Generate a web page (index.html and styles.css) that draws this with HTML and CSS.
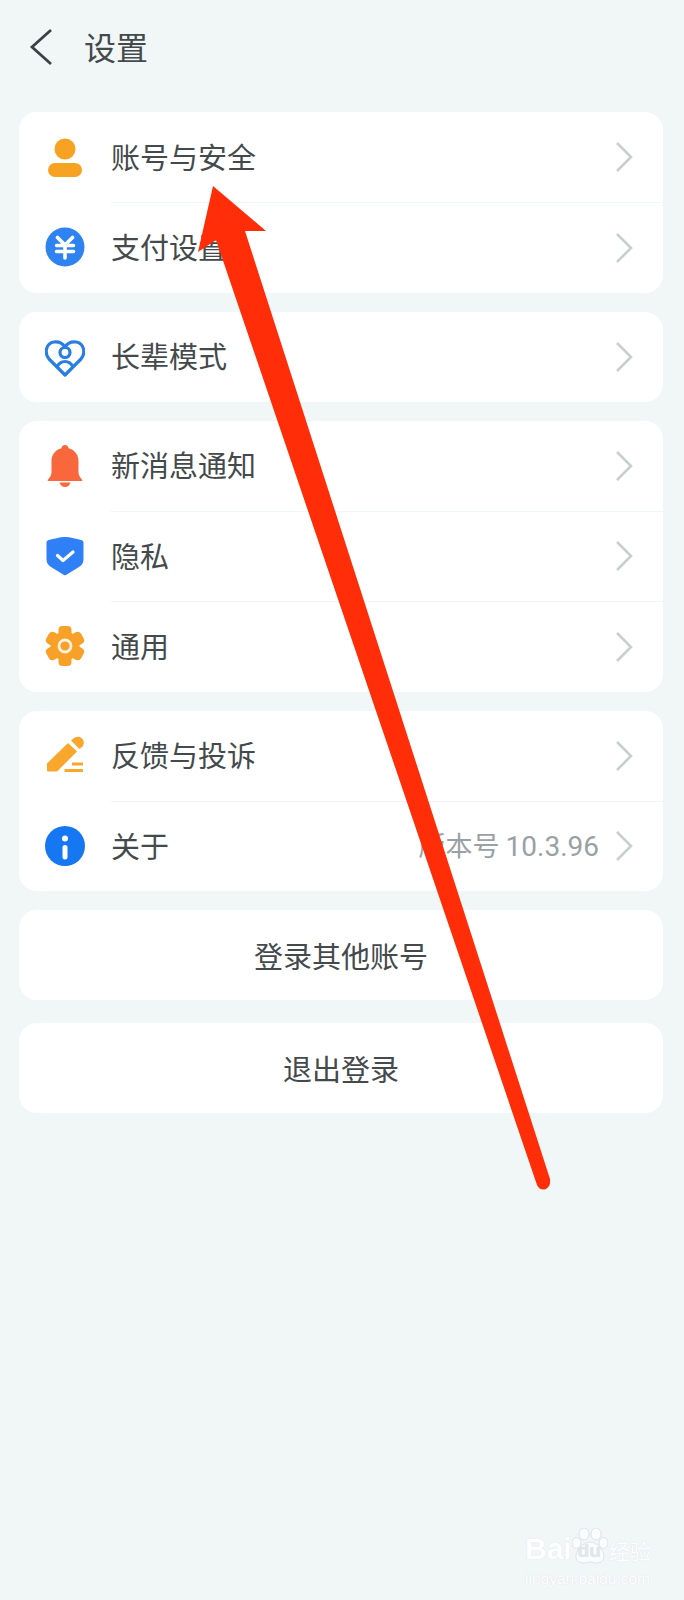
FILE: index.html
```html
<!DOCTYPE html>
<html lang="zh-CN">
<head>
    <meta charset="UTF-8">
    <meta name="viewport" content="width=device-width, initial-scale=1.0">
    <title>设置</title>
    <link rel="stylesheet" href="styles.css">
</head>
<body>
<div class="page">
    <header class="top-bar">
        <svg class="back-icon" width="24" height="38" viewBox="0 0 24 38">
            <polyline points="22,2 3,19 22,36"/>
        </svg>
        <h1 class="top-title">设置</h1>
    </header>

    <div class="card-list">
        <section class="card">
            <div class="row">
                <span class="row-icon">
                    <svg width="40" height="40" viewBox="0 0 40 40" fill="#f8a223">
                        <circle cx="20" cy="12" r="10.5"/>
                        <rect x="3" y="26" width="34" height="14" rx="7"/>
                    </svg>
                </span>
                <div class="row-main"><span class="row-label">账号与安全</span><svg class="chevron" width="18" height="30" viewBox="0 0 18 30"><polyline points="2,1 16,15 2,29"/></svg></div>
            </div>
            <div class="row">
                <span class="row-icon">
                    <svg width="40" height="40" viewBox="0 0 40 40">
                        <circle cx="20" cy="20" r="19.5" fill="#2f83f1"/>
                        <path d="M12.5 10.500l7.500 7.500 7.500-7.500M11.500 18.500h17M11.500 24.500h17M20 18v13" fill="none" stroke="#fff" stroke-width="3.6" stroke-linecap="round" stroke-linejoin="round"/>
                    </svg>
                </span>
                <div class="row-main"><span class="row-label">支付设置</span><svg class="chevron" width="18" height="30" viewBox="0 0 18 30"><polyline points="2,1 16,15 2,29"/></svg></div>
            </div>
        </section>

        <section class="card">
            <div class="row">
                <span class="row-icon">
                    <svg width="40" height="40" viewBox="0 0 40 40" fill="none" stroke="#2a7de1" stroke-width="3.2">
                        <path d="M20 38L4 22C-1 16 1 6 9 5 14 4.300 18 7 20 10 22 7 26 4.300 31 5 39 6 41 16 36 22z" stroke-linejoin="round"/>
                        <circle cx="20" cy="15.500" r="5"/>
                        <path d="M12 30C14 26 17 24.500 20 24.500S26 26 28 30"/>
                    </svg>
                </span>
                <div class="row-main"><span class="row-label">长辈模式</span><svg class="chevron" width="18" height="30" viewBox="0 0 18 30"><polyline points="2,1 16,15 2,29"/></svg></div>
            </div>
        </section>

        <section class="card">
            <div class="row">
                <span class="row-icon">
                    <svg width="40" height="42" viewBox="0 0 40 42" fill="#f9673d">
                        <path d="M20 0c2 0 3.500 1.500 3.500 3.300C30 5 33.500 10 33.500 16v11c0 3.500 1.500 5 3 7 .5.800.8 1 .8 1.500 0 .5-.3.500-1.300.500H4c-1 0-1.300 0-1.300-.5 0-.5.300-.7.800-1.500 1.500-2 3-3.500 3-7V16C6.500 10 10 5 16.500 3.300 16.500 1.500 18 0 20 0z"/>
                        <path d="M14.500 37.500h11c-.5 2.500-2.800 4.500-5.500 4.500s-5-2-5.500-4.500z"/>
                    </svg>
                </span>
                <div class="row-main"><span class="row-label">新消息通知</span><svg class="chevron" width="18" height="30" viewBox="0 0 18 30"><polyline points="2,1 16,15 2,29"/></svg></div>
            </div>
            <div class="row">
                <span class="row-icon">
                    <svg width="40" height="40" viewBox="0 0 40 40">
                        <path d="M20 1c6 0 11 2 16 3 1.500.3 2.500 1.200 2.500 3v16c0 4-1.500 6-4.500 8l-13 8c-.6.400-1.400.400-2 0l-13-8c-3-2-4.500-4-4.500-8V7c0-1.800 1-2.700 2.500-3 5-1 10-3 16-3z" fill="#2f80f6"/>
                        <path d="M12.500 19.500l5.500 5 10-8.500" fill="none" stroke="#fff" stroke-width="3.200" stroke-linecap="round" stroke-linejoin="round"/>
                    </svg>
                </span>
                <div class="row-main"><span class="row-label">隐私</span><svg class="chevron" width="18" height="30" viewBox="0 0 18 30"><polyline points="2,1 16,15 2,29"/></svg></div>
            </div>
            <div class="row">
                <span class="row-icon">
                    <svg width="40" height="40" viewBox="0 0 40 40" fill="#f7a128">
                        <circle cx="20" cy="20" r="14.500"/>
                        <rect x="13.500" y="0" width="13" height="12" rx="4"/>
                        <rect x="13.500" y="0" width="13" height="12" rx="4" transform="rotate(60 20 20)"/>
                        <rect x="13.500" y="0" width="13" height="12" rx="4" transform="rotate(120 20 20)"/>
                        <rect x="13.500" y="0" width="13" height="12" rx="4" transform="rotate(180 20 20)"/>
                        <rect x="13.500" y="0" width="13" height="12" rx="4" transform="rotate(240 20 20)"/>
                        <rect x="13.500" y="0" width="13" height="12" rx="4" transform="rotate(300 20 20)"/>
                        <circle cx="20" cy="20" r="6" stroke="#fdf1dd" stroke-width="2.800"/>
                    </svg>
                </span>
                <div class="row-main"><span class="row-label">通用</span><svg class="chevron" width="18" height="30" viewBox="0 0 18 30"><polyline points="2,1 16,15 2,29"/></svg></div>
            </div>
        </section>

        <section class="card">
            <div class="row">
                <span class="row-icon">
                    <svg width="40" height="40" viewBox="0 0 40 40" fill="#f9a72c">
                        <path d="M2 27.500L23 7l9 8.500-20 20H3.500C2.500 35.500 2 35 2 34z"/>
                        <path d="M26 4.500L29 2c3-2 6-1.500 8 .5s2.500 5 .5 8L34.500 13z"/>
                        <rect x="27" y="26.500" width="11" height="3" rx=".5"/>
                        <rect x="19.500" y="33" width="18.500" height="3" rx=".5"/>
                    </svg>
                </span>
                <div class="row-main"><span class="row-label">反馈与投诉</span><svg class="chevron" width="18" height="30" viewBox="0 0 18 30"><polyline points="2,1 16,15 2,29"/></svg></div>
            </div>
            <div class="row">
                <span class="row-icon">
                    <svg width="40" height="40" viewBox="0 0 40 40">
                        <circle cx="20" cy="20" r="20" fill="#1677f2"/>
                        <circle cx="20" cy="12.500" r="3" fill="#fff"/>
                        <rect x="17.500" y="19" width="5" height="14.500" rx="2.500" fill="#fff"/>
                    </svg>
                </span>
                <div class="row-main"><span class="row-label">关于</span><span class="row-value">版本号 <span class="version-number">10.3.96</span></span><svg class="chevron" width="18" height="30" viewBox="0 0 18 30"><polyline points="2,1 16,15 2,29"/></svg></div>
            </div>
        </section>

        <section class="card action-card">登录其他账号</section>
        <section class="card action-card logout-card">退出登录</section>
    </div>
</div>

<!-- red arrow annotation over the list -->
<svg class="arrow-mark" width="684" height="1600" viewBox="0 0 684 1600">
    <path d="M213 186L266 231 245 231 550 1179Q551 1186 546 1189 540 1191 537 1185L216 240 198 252z" fill="#ff2e08"/>
</svg>

<div class="watermark">
    <div class="wm-top">
        <span class="wm-brand">Bai</span>
        <span class="wm-paw">
            <svg width="36" height="36" viewBox="0 0 36 36" fill="#fbfcfd" stroke="#dde4e7">
                <ellipse cx="12" cy="6" rx="5" ry="6"/>
                <ellipse cx="24" cy="6" rx="5" ry="6"/>
                <ellipse cx="4.500" cy="15" rx="4.500" ry="5.500"/>
                <ellipse cx="31.500" cy="15" rx="4.500" ry="5.500"/>
                <path d="M18 14c6 0 14 8 14 14 0 5-4 7-8 7-2.500 0-4-1-6-1s-3.500 1-6 1c-4 0-8-2-8-7 0-6 8-14 14-14z"/>
            </svg>
            <span class="wm-du">du</span>
        </span>
        <span class="wm-cn">经验</span>
    </div>
    <div class="wm-url">jingyan.baidu.com</div>
</div>
</body>
</html>
```

FILE: styles.css
```css
body {
    margin: 0;
    background-color: #f1f6f7;
    color: #444a4c;
    font-family: "Noto Sans CJK SC", "Noto Sans", sans-serif;
}

.page {
    min-height: 1600px;
    padding: 0 21px 0 19px;
    box-sizing: border-box;
}

.top-bar {
    height: 112px;
    display: flex;
    align-items: flex-start;
    padding-top: 28px;
    box-sizing: border-box;
}

.back-icon {
    margin-left: 10px;
    fill: none;
    stroke: #3c4143;
    stroke-width: 2.8;
}

.top-title {
    margin: -6px 0 0 31px;
    font-size: 32px;
    line-height: 48px;
    font-weight: 400;
}

.card-list {
    display: flex;
    flex-direction: column;
    gap: 19px;
}

.card {
    background-color: #ffffff;
    border-radius: 18px;
    overflow: hidden;
}

.row {
    display: flex;
    height: 90px;
}

.row + .row {
    height: 90.5px;
}

.row-icon {
    flex: none;
    width: 92px;
    padding-left: 26px;
    box-sizing: border-box;
    display: flex;
    align-items: center;
}

.row-main {
    flex: 1;
    display: flex;
    align-items: center;
    padding-right: 30px;
}

.row + .row .row-main {
    border-top: 1px solid #f1f5f6;
}

.row-label {
    flex: 1;
    margin-bottom: 3px;
    font-size: 29px;
}

.row-value {
    margin-right: 16px;
    margin-bottom: 3px;
    color: #9aa1a4;
    font-size: 27px;
}

.version-number {
    font-family: Roboto, sans-serif;
    font-size: 28px;
}

.chevron {
    fill: none;
    stroke: #c8cfd1;
    stroke-width: 2.6;
}

.action-card {
    height: 90px;
    display: flex;
    align-items: center;
    justify-content: center;
    font-size: 29px;
}

.logout-card {
    margin-top: 4px;
}

.arrow-mark {
    position: absolute;
    left: 0;
    top: 0;
}

.watermark {
    position: absolute;
    left: 525px;
    top: 1526px;
    width: 124px;
    color: #ffffff;
    text-shadow: 0 0 1px #d3dbdf;
}

.wm-top {
    display: flex;
    align-items: flex-end;
    height: 38px;
}

.wm-brand {
    font-family: "Liberation Sans", sans-serif;
    font-weight: 700;
    font-size: 30px;
    line-height: 30px;
}

.wm-paw {
    position: relative;
    width: 36px;
    height: 36px;
    flex: none;
}

.wm-du {
    position: absolute;
    left: 6px;
    top: 12px;
    color: #e2e8ea;
    font-family: "Liberation Sans", sans-serif;
    font-weight: 700;
    font-size: 19px;
    line-height: 22px;
}

.wm-cn {
    margin-left: 1px;
    font-size: 21px;
    line-height: 28px;
    white-space: nowrap;
}

.wm-url {
    margin-top: 6px;
    font-family: "Liberation Sans", sans-serif;
    font-size: 15.5px;
    line-height: 17px;
    white-space: nowrap;
}
```
